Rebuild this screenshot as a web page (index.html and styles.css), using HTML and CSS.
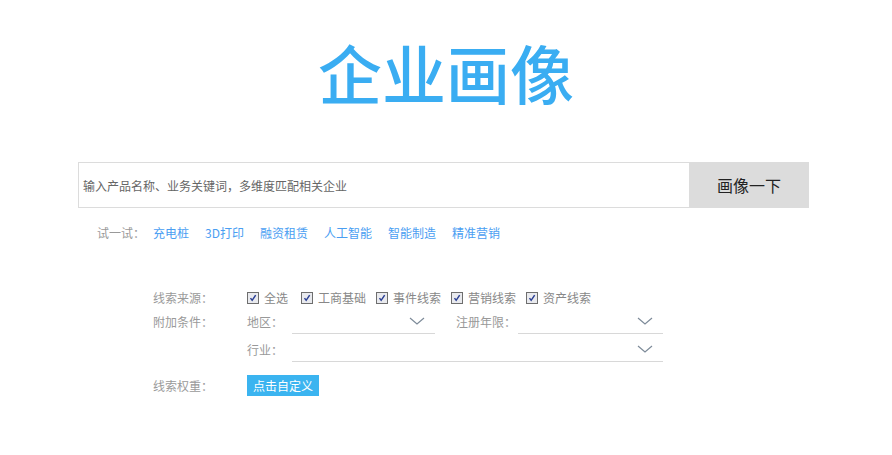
FILE: index.html
```html
<!DOCTYPE html>
<html lang="zh-CN">
<head>
<meta charset="utf-8">
<title>企业画像</title>
<link rel="stylesheet" href="styles.css">
</head>
<body>
<div class="page">
  <h1 class="title">企业画像</h1>

  <div class="search">
    <div class="search-input">输入产品名称、业务关键词，多维度匹配相关企业</div>
    <div class="search-btn">画像一下</div>
  </div>

  <div class="try">
    <span class="try-label">试一试：</span>
    <a class="try-link">充电桩</a>
    <a class="try-link">3D打印</a>
    <a class="try-link">融资租赁</a>
    <a class="try-link">人工智能</a>
    <a class="try-link">智能制造</a>
    <a class="try-link">精准营销</a>
  </div>

  <div class="filters">
    <div class="row row-source">
      <div class="label">线索来源：</div>
      <div class="checks">
        <label class="check check-all"><span class="box"><svg viewBox="0 0 12 12" width="12" height="12"><path d="M3 6.2 L5 8.8 L9.2 2.6" fill="none" stroke="#2b3f94" stroke-width="1.8"/></svg></span>全选</label>
        <label class="check"><span class="box"><svg viewBox="0 0 12 12" width="12" height="12"><path d="M3 6.2 L5 8.8 L9.2 2.6" fill="none" stroke="#2b3f94" stroke-width="1.8"/></svg></span>工商基础</label>
        <label class="check"><span class="box"><svg viewBox="0 0 12 12" width="12" height="12"><path d="M3 6.2 L5 8.8 L9.2 2.6" fill="none" stroke="#2b3f94" stroke-width="1.8"/></svg></span>事件线索</label>
        <label class="check"><span class="box"><svg viewBox="0 0 12 12" width="12" height="12"><path d="M3 6.2 L5 8.8 L9.2 2.6" fill="none" stroke="#2b3f94" stroke-width="1.8"/></svg></span>营销线索</label>
        <label class="check"><span class="box"><svg viewBox="0 0 12 12" width="12" height="12"><path d="M3 6.2 L5 8.8 L9.2 2.6" fill="none" stroke="#2b3f94" stroke-width="1.8"/></svg></span>资产线索</label>
      </div>
    </div>

    <div class="row row-extra">
      <div class="label">附加条件：</div>
      <div class="conds">
        <div class="cond">
          <span class="cond-label">地区：</span>
          <div class="select sel-area"><svg class="chev" viewBox="0 0 16 8" width="16" height="8"><path d="M1 1 L8 7 L15 1" fill="none" stroke="#7d8b99" stroke-width="1.2"/></svg></div>
          <span class="cond-label cond-gap">注册年限：</span>
          <div class="select sel-year"><svg class="chev" viewBox="0 0 16 8" width="16" height="8"><path d="M1 1 L8 7 L15 1" fill="none" stroke="#7d8b99" stroke-width="1.2"/></svg></div>
        </div>
        <div class="cond">
          <span class="cond-label">行业：</span>
          <div class="select sel-industry"><svg class="chev" viewBox="0 0 16 8" width="16" height="8"><path d="M1 1 L8 7 L15 1" fill="none" stroke="#7d8b99" stroke-width="1.2"/></svg></div>
        </div>
      </div>
    </div>

    <div class="row row-weight">
      <div class="label">线索权重：</div>
      <div><span class="custom-btn">点击自定义</span></div>
    </div>
  </div>
</div>
</body>
</html>
```

FILE: styles.css
```css
html, body {
  margin: 0;
  padding: 0;
  background: #fff;
}
body {
  font-family: "Noto Sans CJK SC", "Noto Sans", "Liberation Sans", sans-serif;
  font-size: 12px;
  color: #666;
}
.page {
  width: 892px;
}
.title {
  margin: 0;
  padding-top: 33px;
  height: 93px;
  line-height: 76px;
  font-size: 64px;
  font-weight: 500;
  color: #3aadf2;
  text-align: center;
  letter-spacing: 0;
}
.search {
  margin: 36px 0 0 78px;
  width: 731px;
  height: 46px;
  display: flex;
}
.search-input {
  flex: 1;
  box-sizing: border-box;
  border: 1px solid #dcdcdc;
  border-right: none;
  padding-left: 4px;
  display: flex;
  align-items: center;
  font-size: 12px;
  color: #666;
}
.search-btn {
  width: 120px;
  background: #dcdcdc;
  display: flex;
  align-items: center;
  justify-content: center;
  font-size: 16px;
  color: #222;
}
.try {
  margin: 16px 0 0 97px;
  height: 18px;
  line-height: 18px;
  display: flex;
  gap: 16px;
}
.try-label {
  color: #999;
  margin-right: -8px;
}
.try-link {
  color: #4a9ef2;
  cursor: pointer;
}
.filters {
  margin: 46px 0 0 153px;
}
.row {
  display: grid;
  grid-template-columns: 94px 1fr;
}
.label {
  color: #9a9a9a;
}
.row-source {
  height: 20px;
  line-height: 20px;
}
.checks {
  display: flex;
  gap: 10px;
}
.check {
  display: flex;
  align-items: center;
  color: #888;
}
.check-all {
  margin-right: 3px;
}
.box {
  width: 12px;
  height: 12px;
  box-sizing: border-box;
  border: 1px solid #6e6e6e;
  background: #e9eaee;
  margin-right: 5px;
  display: flex;
  align-items: center;
  justify-content: center;
}
.box svg {
  display: block;
  width: 10px;
  height: 10px;
}
.row-extra {
  margin-top: 2px;
}
.row-extra .label {
  line-height: 24px;
}
.conds {
  display: flex;
  flex-direction: column;
  gap: 4px;
}
.cond {
  display: flex;
  align-items: stretch;
  height: 24px;
}
.cond-label {
  width: 45px;
  line-height: 24px;
  color: #999;
}
.cond-gap {
  width: 62px;
  margin-left: 21px;
}
.select {
  position: relative;
  box-sizing: border-box;
  border-bottom: 1px solid #d8d8d8;
}
.sel-area {
  width: 143px;
}
.sel-year {
  width: 145px;
}
.sel-industry {
  width: 371px;
}
.chev {
  position: absolute;
  right: 10px;
  top: 7px;
}
.row-weight {
  margin-top: 13px;
  line-height: 21px;
}
.custom-btn {
  display: inline-block;
  height: 21px;
  line-height: 21px;
  padding: 0 6px;
  background: #3bb4f0;
  color: #fff;
  font-size: 12px;
}
```
